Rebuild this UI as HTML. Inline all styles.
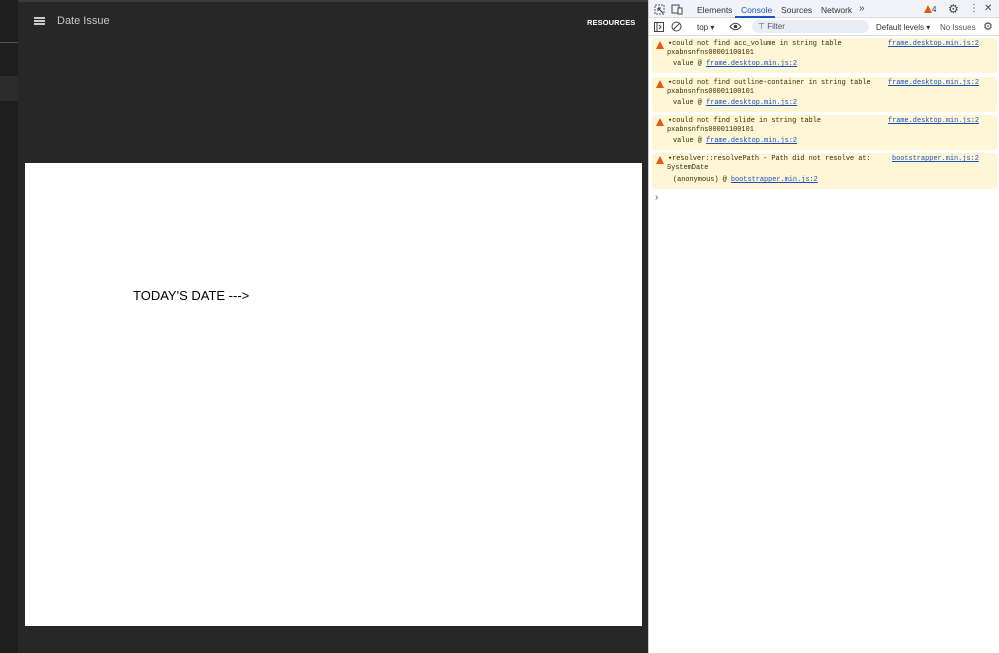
<!DOCTYPE html>
<html><head><meta charset="utf-8"><style>
*{box-sizing:border-box;margin:0;padding:0}
body{width:999px;height:653px;overflow:hidden;background:#272727;font-family:"Liberation Sans",sans-serif;position:relative}
.abs{position:absolute}
.mono{font-family:"Liberation Mono",monospace;font-size:6.9px;color:#3b2a00;line-height:11px;white-space:nowrap}
.lnk{color:#1a4fc4;text-decoration:underline}
.w{position:absolute;left:652px;width:345px;background:#fef6d5;border-radius:3px}
.tri{position:absolute;left:4px;top:3px;width:0;height:0;border-left:4px solid transparent;border-right:4px solid transparent;border-bottom:8px solid #e8590c}
</style></head><body>
<div class="abs" style="left:0;top:0;width:18px;height:653px;background:#1e1e1e"></div>
<div class="abs" style="left:0;top:42px;width:18px;height:1px;background:#555"></div>
<div class="abs" style="left:0;top:76px;width:18px;height:25px;background:#2c2c2c"></div>
<div class="abs" style="left:18px;top:0;width:630px;height:2px;background:#3a3a3a"></div>
<div class="abs" style="left:34px;top:17px;width:11px;height:2px;background:#ccc;box-shadow:0 3px 0 #ccc,0 6px 0 #ccc"></div>
<div class="abs" style="left:57px;top:15px;color:#c8c8c8;font-size:11px">Date Issue</div>
<div class="abs" style="left:587px;top:18px;color:#fff;font-size:7.5px;font-weight:bold;letter-spacing:.1px">RESOURCES</div>
<div class="abs" style="left:25px;top:163px;width:617px;height:463px;background:#fff"></div>
<div class="abs" style="left:133px;top:288px;font-size:13px;color:#000">TODAY'S DATE ---&gt;</div>

<div class="abs" style="left:648px;top:0;width:351px;height:653px;background:#fff;border-left:1px solid #ccc"></div>
<div class="abs" style="left:649px;top:0;width:350px;height:18px;background:#f1f3f9;border-bottom:1px solid #dadce0"></div>
<div class="abs" style="left:649px;top:18px;width:350px;height:18px;background:#fff;border-bottom:1px solid #dadce0"></div>
<svg class="abs" style="left:654px;top:4px" width="11" height="11"><rect x="1" y="1" width="9" height="9" fill="none" stroke="#555" stroke-dasharray="2 1"/><path d="M4 4l5 5M4 4h3M4 4v3" stroke="#333" fill="none"/></svg>
<svg class="abs" style="left:671px;top:4px" width="12" height="11"><rect x="1" y="1" width="7" height="8" fill="none" stroke="#444"/><rect x="7" y="4" width="4" height="6" fill="#fff" stroke="#444"/></svg>
<div class="abs" style="left:697px;top:5px;font-size:8.5px;color:#333">Elements</div>
<div class="abs" style="left:741px;top:5px;font-size:8.5px;color:#1a56c4">Console</div>
<div class="abs" style="left:735px;top:16px;width:40px;height:2px;background:#1a56c4"></div>
<div class="abs" style="left:781px;top:5px;font-size:8.5px;color:#333">Sources</div>
<div class="abs" style="left:821px;top:5px;font-size:8.5px;color:#333">Network</div>
<div class="abs" style="left:859px;top:3px;font-size:10px;color:#444">»</div>
<div class="tri" style="left:924px;top:5px"></div>
<div class="abs" style="left:932px;top:5px;font-size:8px;color:#333">4</div>
<div class="abs" style="left:948px;top:2px;font-size:12px;color:#444">⚙</div>
<div class="abs" style="left:969px;top:3px;font-size:10px;color:#444">⋮</div>
<div class="abs" style="left:984px;top:3px;font-size:10px;color:#444">✕</div>
<svg class="abs" style="left:654px;top:22px" width="10" height="10"><rect x=".5" y=".5" width="9" height="9" fill="none" stroke="#444"/><path d="M3 1v8M5 3l2 2-2 2" stroke="#444" fill="none"/></svg>
<svg class="abs" style="left:671px;top:21px" width="11" height="11"><circle cx="5.5" cy="5.5" r="4.5" fill="none" stroke="#444"/><path d="M2.5 8.5l6-6" stroke="#444"/></svg>
<div class="abs" style="left:697px;top:23px;font-size:8px;color:#333">top ▾</div>
<svg class="abs" style="left:729px;top:22px" width="13" height="9"><path d="M1 4.5Q6.5-2 12 4.5Q6.5 11 1 4.5Z" fill="none" stroke="#444"/><circle cx="6.5" cy="4.5" r="1.8" fill="#444"/></svg>
<div class="abs" style="left:752px;top:20px;width:117px;height:13px;background:#e9edf5;border-radius:7px"></div>
<div class="abs" style="left:758px;top:22px;font-size:8px;color:#555">⊤ Filter</div>
<div class="abs" style="left:876px;top:23px;font-size:8px;color:#333">Default levels ▾</div>
<div class="abs" style="left:940px;top:23px;font-size:8px;color:#555">No Issues</div>
<div class="abs" style="left:983px;top:20px;font-size:11px;color:#444">⚙</div>

<div class="w" style="top:38px;height:35px"><div class="tri"></div>
<div class="mono abs" style="left:16px;top:1px">▾could not find acc_volume in string table</div>
<div class="mono abs" style="left:15px;top:10px">pxabnsnfns00001100101</div>
<div class="mono abs" style="left:21px;top:21px">value @ <span class="lnk">frame.desktop.min.js:2</span></div>
<div class="mono abs lnk" style="left:236px;top:1px">frame.desktop.min.js:2</div></div>
<div class="w" style="top:77px;height:35px"><div class="tri"></div>
<div class="mono abs" style="left:16px;top:1px">▾could not find outline-container in string table</div>
<div class="mono abs" style="left:15px;top:10px">pxabnsnfns00001100101</div>
<div class="mono abs" style="left:21px;top:21px">value @ <span class="lnk">frame.desktop.min.js:2</span></div>
<div class="mono abs lnk" style="left:236px;top:1px">frame.desktop.min.js:2</div></div>
<div class="w" style="top:115px;height:35px"><div class="tri"></div>
<div class="mono abs" style="left:16px;top:1px">▾could not find slide in string table</div>
<div class="mono abs" style="left:15px;top:10px">pxabnsnfns00001100101</div>
<div class="mono abs" style="left:21px;top:21px">value @ <span class="lnk">frame.desktop.min.js:2</span></div>
<div class="mono abs lnk" style="left:236px;top:1px">frame.desktop.min.js:2</div></div>
<div class="w" style="top:153px;height:36px"><div class="tri"></div>
<div class="mono abs" style="left:16px;top:1px">▾resolver::resolvePath - Path did not resolve at:</div>
<div class="mono abs" style="left:15px;top:10px">SystemDate</div>
<div class="mono abs" style="left:21px;top:22px">(anonymous) @ <span class="lnk">bootstrapper.min.js:2</span></div>
<div class="mono abs lnk" style="left:240px;top:1px">bootstrapper.min.js:2</div></div>
<div class="abs" style="left:655px;top:192px;font-size:10px;color:#1a56c4">›</div>
</body></html>
